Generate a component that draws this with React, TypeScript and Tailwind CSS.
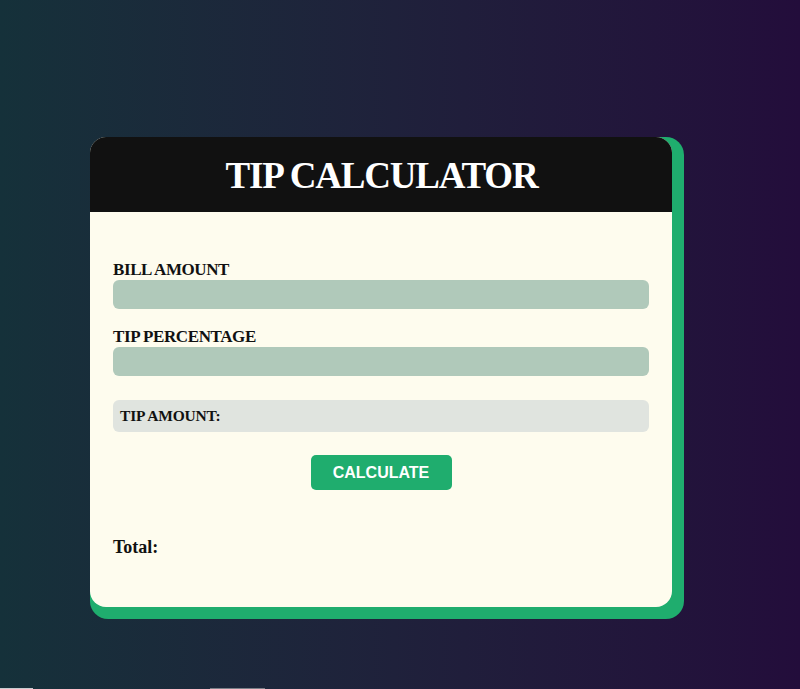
import React from "react";

export default function App() {
  const serif = { fontFamily: '"Liberation Serif", "Times New Roman", serif' };
  return (
    <div className="w-full h-[689px] overflow-hidden flex flex-col bg-gradient-to-r from-[#15313a] to-[#230d3b]">
      <div className="flex-1 pt-[137px] pl-[90px]">
        <div className="w-[594px] h-[482px] rounded-[18px] bg-[#1fad6e] pr-[12px] pb-[12px]">
          <div
            className="w-full h-full rounded-[16px] bg-[#fefcee] overflow-hidden flex flex-col"
            style={serif}
          >
            <div className="h-[75px] bg-[#111111] flex items-center justify-center">
              <h1 className="text-[37px] font-bold text-white leading-none tracking-[-1.2px] pt-[2px] pl-[1px]">
                TIP CALCULATOR
              </h1>
            </div>
            <div className="flex flex-col px-[23px] pt-[48px]">
              <label className="text-[17px] font-bold text-[#111] leading-[20px] tracking-[-0.4px]">BILL AMOUNT</label>
              <div className="h-[29px] rounded-[6px] bg-[#b0c9ba]" />
              <label className="mt-[18px] text-[17px] font-bold text-[#111] leading-[20px] tracking-[-0.4px]">TIP PERCENTAGE</label>
              <div className="h-[29px] rounded-[6px] bg-[#b0c9ba]" />
              <div className="mt-[24px] h-[32px] rounded-[6px] bg-[#e0e4df] flex items-center px-[7px]">
                <span className="text-[15.5px] font-bold text-[#111] tracking-[-0.2px]">TIP AMOUNT:</span>
              </div>
              <div className="mt-[23px] flex justify-center">
                <button
                  className="w-[141px] h-[35px] rounded-[5px] bg-[#1fad6e] text-white text-[16px] font-bold"
                  style={{ fontFamily: '"Liberation Sans", Arial, sans-serif' }}
                >
                  CALCULATE
                </button>
              </div>
              <div className="mt-[47px] text-[18px] font-bold text-[#111] leading-[20px]">Total:</div>
            </div>
          </div>
        </div>
      </div>
      <div className="h-[1px] flex">
        <div className="w-[33px] bg-[#c8ccd0]" />
        <div className="w-[177px]" />
        <div className="w-[55px] bg-[#7a8088]" />
      </div>
    </div>
  );
}
